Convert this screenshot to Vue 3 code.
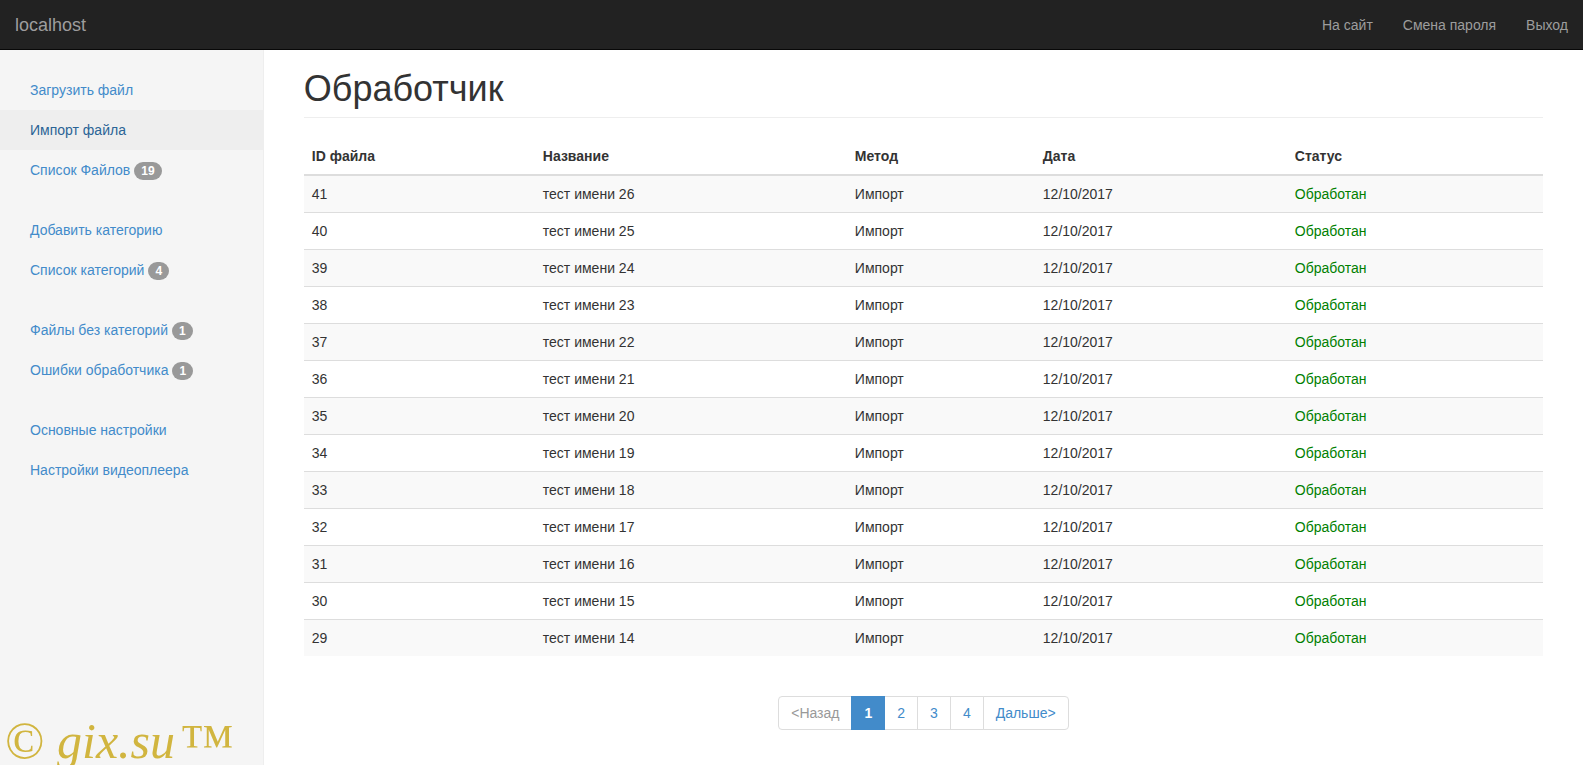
<script setup>
const navLinks = ['На сайт', 'Смена пароля', 'Выход']

const menuGroups = [
  [
    { label: 'Загрузить файл' },
    { label: 'Импорт файла', active: true },
    { label: 'Список Файлов', badge: 19 }
  ],
  [
    { label: 'Добавить категорию' },
    { label: 'Список категорий', badge: 4 }
  ],
  [
    { label: 'Файлы без категорий', badge: 1 },
    { label: 'Ошибки обработчика', badge: 1 }
  ],
  [
    { label: 'Основные настройки' },
    { label: 'Настройки видеоплеера' }
  ]
]

// ids run 41..29, names 26..14
const rows = Array.from({ length: 13 }, (_, i) => ({
  id: 41 - i,
  name: `тест имени ${26 - i}`,
  method: 'Импорт',
  date: '12/10/2017',
  status: 'Обработан'
}))

const pages = [1, 2, 3, 4]
</script>

<template>
  <div class="page">
    <header class="navbar">
      <a class="navbar__brand">localhost</a>
      <nav class="navbar__links">
        <a v-for="link in navLinks" :key="link">{{ link }}</a>
      </nav>
    </header>

    <div class="layout">
      <aside class="sidebar">
        <ul v-for="(group, i) in menuGroups" :key="i" class="menu">
          <li v-for="item in group" :key="item.label" :class="{ 'is-active': item.active }">
            <a>{{ item.label }}</a>
            <span v-if="item.badge" class="badge">{{ item.badge }}</span>
          </li>
        </ul>
        <div class="watermark"><span class="watermark__copy">©</span> <i>gix.su</i><span class="watermark__tm">™</span></div>
      </aside>

      <main class="main">
        <h1 class="title">Обработчик</h1>

        <table class="table">
          <colgroup>
            <col class="col-id" />
            <col class="col-name" />
            <col class="col-method" />
            <col class="col-date" />
            <col />
          </colgroup>
          <thead>
            <tr>
              <th>ID файла</th>
              <th>Название</th>
              <th>Метод</th>
              <th>Дата</th>
              <th>Статус</th>
            </tr>
          </thead>
          <tbody>
            <tr v-for="row in rows" :key="row.id">
              <td>{{ row.id }}</td>
              <td>{{ row.name }}</td>
              <td>{{ row.method }}</td>
              <td>{{ row.date }}</td>
              <td class="status">{{ row.status }}</td>
            </tr>
          </tbody>
        </table>

        <div class="pager">
          <ul class="pagination">
            <li class="disabled"><a>&lt;Назад</a></li>
            <li v-for="p in pages" :key="p" :class="{ active: p === 1 }"><a>{{ p }}</a></li>
            <li><a>Дальше&gt;</a></li>
          </ul>
        </div>
      </main>
    </div>
  </div>
</template>

<style>
html, body { margin: 0; background: #fff; overflow: hidden; }
</style>

<style scoped>
.page {
  font-family: "Liberation Sans", Arial, sans-serif;
  font-size: 14px;
  line-height: 20px;
  color: #333;
  min-height: 100vh;
  display: flex;
  flex-direction: column;
}

.navbar {
  height: 50px;
  box-sizing: border-box;
  background: #222;
  border-bottom: 1px solid #080808;
  display: flex;
  justify-content: space-between;
}
.navbar__brand {
  padding: 15px;
  font-size: 18px;
  color: #9d9d9d;
}
.navbar__links { display: flex; }
.navbar__links a {
  padding: 15px;
  color: #9d9d9d;
}

.layout { flex: 1; display: flex; }

.sidebar {
  position: relative;
  width: 263.83px;
  flex: none;
  box-sizing: border-box;
  padding-top: 20px;
  background: #f5f5f5;
  border-right: 1px solid #eee;
}

.menu { list-style: none; margin: 0 0 20px; padding: 0; }
.menu li { padding: 10px 30px; white-space: nowrap; }
.menu a { color: #428bca; }
.menu li.is-active { background: #eee; }
.menu li.is-active a { color: #2a6496; }

.badge {
  display: inline-block;
  margin-left: 4px;
  padding: 3px 7px;
  font-size: 12px;
  font-weight: bold;
  line-height: 12px;
  color: #fff;
  text-align: center;
  vertical-align: baseline;
  background: #999;
  border-radius: 10px;
}

.watermark {
  position: absolute;
  left: 5px;
  bottom: -5px;
  font-family: "Liberation Serif", "Times New Roman", serif;
  font-size: 50px;
  line-height: 58px;
  color: #d1b53f;
  white-space: nowrap;
}
.watermark__copy {
  font-size: 52px;
  line-height: 0;
}
.watermark__tm {
  margin-left: 5px;
  font-size: 55px;
  line-height: 0;
  vertical-align: -4px;
}

.main {
  flex: 1;
  min-width: 0;
  padding: 19px 40px 0;
}

.title {
  margin: 0 0 20px;
  padding-bottom: 8px;
  border-bottom: 1px solid #eee;
  font-size: 36px;
  font-weight: 500;
  line-height: 39.6px;
  color: #333;
}

.table {
  width: 100%;
  border-collapse: collapse;
  border-spacing: 0;
  table-layout: fixed;
}
.col-id { width: 231px; }
.col-name { width: 312px; }
.col-method { width: 188px; }
.col-date { width: 252px; }

.table th,
.table td {
  padding: 8px;
  text-align: left;
  line-height: 20px;
}
.table th { font-weight: bold; border-bottom: 2px solid #ddd; }
.table td { border-top: 1px solid #ddd; }
.table thead + tbody tr:first-child td { border-top: 0; }
.table tbody tr:nth-child(odd) td { background: #f9f9f9; }
.status { color: green; }

.pager { margin-top: 40px; text-align: center; }
.pagination {
  display: inline-flex;
  list-style: none;
  margin: 0;
  padding: 0;
  vertical-align: top;
}
.pagination li a {
  display: block;
  padding: 6px 12px;
  margin-left: -1px;
  color: #428bca;
  background: #fff;
  border: 1px solid #ddd;
}
.pagination li:first-child a {
  margin-left: 0;
  border-radius: 4px 0 0 4px;
}
.pagination li:last-child a { border-radius: 0 4px 4px 0; }
.pagination li.disabled a { color: #999; }
.pagination li.active a {
  position: relative;
  margin-left: -2px;
  padding-left: 13px;
  color: #fff;
  font-weight: bold;
  background: #428bca;
  border-color: #428bca;
}
</style>
